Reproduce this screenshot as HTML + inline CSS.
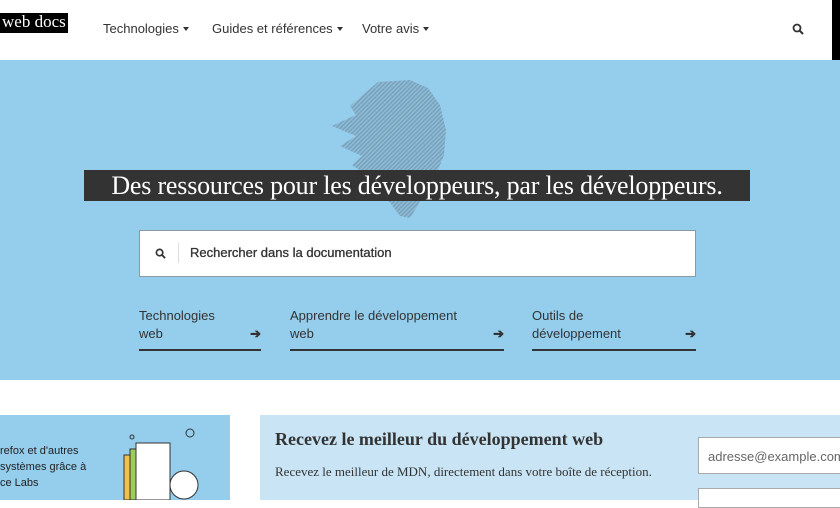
<!DOCTYPE html>
<html><head><meta charset="utf-8"><style>
*{margin:0;padding:0;box-sizing:border-box}
body{width:840px;height:500px;overflow:hidden;background:#fff;font-family:"Liberation Sans",sans-serif;position:relative;color:#333}
.abs{position:absolute}
.nav{font-size:13px;color:#333;top:21px}
.caret{display:inline-block;width:0;height:0;border-left:3.5px solid transparent;border-right:3.5px solid transparent;border-top:4px solid #333;margin-left:4px;vertical-align:2px}
.link{font-size:13px;line-height:18px;color:#333;top:307px;border-bottom:2px solid #333;height:44px}
.arr{position:absolute;right:0;top:18px;font-size:13px;font-weight:bold}
</style></head><body>
<div class="abs" style="left:0;top:13px;background:#000;color:#fff;font-family:'Liberation Serif',serif;font-size:17px;padding:0 2px;height:20px;line-height:18px">web docs</div>
<div class="abs nav" style="left:103px">Technologies<span class="caret"></span></div>
<div class="abs nav" style="left:212px">Guides et références<span class="caret"></span></div>
<div class="abs nav" style="left:362px">Votre avis<span class="caret"></span></div>
<svg class="abs" style="left:792px;top:23px" width="12" height="12" viewBox="0 0 12 12"><circle cx="5" cy="5" r="3.5" fill="none" stroke="#333" stroke-width="1.8"/><path d="M7.5 7.5L11 11" stroke="#333" stroke-width="2"/></svg>
<div class="abs" style="left:832px;top:0;width:8px;height:60px;background:#000"></div>
<div class="abs" style="left:0;top:60px;width:840px;height:320px;background:#95cdec"></div>
<svg class="abs" style="left:0;top:60px" width="840" height="320">
<defs><pattern id="h" width="3" height="3" patternUnits="userSpaceOnUse" patternTransform="rotate(45)"><rect width="3" height="3" fill="#8fb7d0"/><rect width="1.5" height="3" fill="#6f97b0"/></pattern></defs>
<path d="M378 22 L410 20 L428 28 L440 45 L446 70 L444 95 L436 115 L425 128 L418 145 L410 158 L400 156 L388 140 L375 125 L362 112 L352 105 L362 96 L340 86 L356 76 L332 66 L356 55 L350 46 L364 34 Z" fill="url(#h)" opacity="0.8"/>
</svg>
<div class="abs" style="left:84px;top:170px;width:666px;height:31px;background:#333;color:#fff;font-family:'Liberation Serif',serif;font-size:26px;line-height:31px;text-align:center;white-space:nowrap;letter-spacing:-0.2px">Des ressources pour les développeurs, par les développeurs.</div>
<div class="abs" style="left:139px;top:230px;width:557px;height:47px;background:#fff;border:1px solid #8a9aa3"></div>
<svg class="abs" style="left:155px;top:248px" width="11" height="11" viewBox="0 0 12 12"><circle cx="5" cy="5" r="3.5" fill="none" stroke="#333" stroke-width="1.8"/><path d="M7.5 7.5L11 11" stroke="#333" stroke-width="2"/></svg>
<div class="abs" style="left:178px;top:243px;width:1px;height:20px;background:#ddd"></div>
<div class="abs" style="left:190px;top:245px;font-size:13px;color:#333;-webkit-text-stroke:0.3px #333">Rechercher dans la documentation</div>
<div class="abs link" style="left:139px;width:122px">Technologies<br>web<span class="arr">➔</span></div>
<div class="abs link" style="left:290px;width:214px">Apprendre le développement<br>web<span class="arr">➔</span></div>
<div class="abs link" style="left:532px;width:164px">Outils de<br>développement<span class="arr">➔</span></div>
<div class="abs" style="left:0;top:415px;width:230px;height:85px;background:#95cdec"></div>
<div class="abs" style="left:0;top:443px;font-size:11px;line-height:16px;color:#222">refox et d'autres<br>systèmes grâce à<br>ce Labs</div>
<svg class="abs" style="left:120px;top:425px" width="90" height="75">
<rect x="4" y="30" width="30" height="45" fill="#f2c04b" stroke="#333"/><rect x="10" y="24" width="30" height="51" fill="#9acd5a" stroke="#333"/><rect x="16" y="18" width="34" height="57" fill="#fff" stroke="#333"/>
<circle cx="64" cy="60" r="14" fill="#fff" stroke="#333"/><circle cx="70" cy="8" r="4" fill="none" stroke="#333"/><circle cx="12" cy="12" r="2" fill="none" stroke="#333"/>
</svg>
<div class="abs" style="left:260px;top:415px;width:580px;height:85px;background:#c9e5f5"></div>
<div class="abs" style="left:275px;top:429px;font-family:'Liberation Serif',serif;font-weight:bold;font-size:18px;color:#333">Recevez le meilleur du développement web</div>
<div class="abs" style="left:275px;top:464px;font-family:'Liberation Serif',serif;font-size:13px;color:#333">Recevez le meilleur de MDN, directement dans votre boîte de réception.</div>
<div class="abs" style="left:698px;top:437px;width:150px;height:37px;background:#fff;border:1px solid #aaa;font-size:13px;color:#666;padding:11px 0 0 9px">adresse@example.com</div>
<div class="abs" style="left:698px;top:488px;width:150px;height:20px;background:#fff;border:1px solid #aaa"></div>
</body></html>
